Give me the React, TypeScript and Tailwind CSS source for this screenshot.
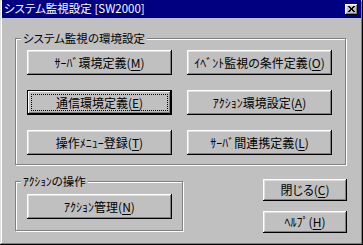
import React from "react";

const font = "font-['Noto_Sans_CJK_JP','Noto_Sans',sans-serif] [font-feature-settings:'palt']";
const bevel =
  "shadow-[inset_-1px_-1px_#000,inset_1px_1px_#fff,inset_-2px_-2px_#808080,inset_2px_2px_#dfdfdf]";
const bevelDefault =
  "shadow-[inset_0_0_0_1px_#000,inset_-2px_-2px_#000,inset_2px_2px_#fff,inset_-3px_-3px_#808080]";

function Label({ text, k }: { text: string; k: string }) {
  const i = text.indexOf("(");
  return (
    <span>
      {text.slice(0, i)}(<span className="underline underline-offset-2">{k}</span>)
    </span>
  );
}

function Btn({
  text,
  k,
  w = "w-[145px]",
  h = "h-[25px]",
  isDefault = false,
}: {
  text: string;
  k: string;
  w?: string;
  h?: string;
  isDefault?: boolean;
}) {
  return (
    <button
      className={`relative ${w} ${h} bg-[#c0c0c0] ${isDefault ? bevelDefault : bevel} flex items-center justify-center text-[12px] leading-none text-black`}
    >
      <Label text={text} k={k} />
      {isDefault && (
        <span className="absolute inset-[4px] border border-dotted border-black" />
      )}
    </button>
  );
}

function Group({
  title,
  className,
  children,
}: {
  title: string;
  className: string;
  children: React.ReactNode;
}) {
  return (
    <div
      className={`relative border border-[#808080] shadow-[inset_1px_1px_#fff,1px_1px_#fff] ${className}`}
    >
      <span className="absolute -top-[8px] left-[5px] bg-[#c0c0c0] px-[2px] text-[11.5px] leading-[14px] text-black">
        {title}
      </span>
      {children}
    </div>
  );
}

export default function App() {
  return (
    <div
      className={`w-[363px] h-[245px] bg-[#c0c0c0] flex flex-col px-[2px] pb-[3px] shadow-[inset_-1px_-1px_#000,inset_1px_1px_#dfdfdf,inset_-2px_-2px_#808080,inset_2px_2px_#fff] ${font}`}
    >
      <div className="h-[18px] bg-[#000080] flex items-center justify-between pl-[2px] pr-[3px]">
        <span className="text-white text-[11.5px] leading-none">システム監視設定 [SW2000]</span>
        <div className={`w-[13px] h-[11px] bg-[#c0c0c0] ${bevel} flex items-center justify-center`}>
          <svg width="7" height="6" viewBox="0 0 7 6">
            <path d="M0 0h2v1h1v1h1v-1h1v-1h2v1h-1v1h-1v2h1v1h1v1h-2v-1h-1v-1h-1v1h-1v1h-2v-1h1v-1h1v-2h-1v-1h-1z" fill="#000" />
          </svg>
        </div>
      </div>

      <div className="flex flex-col pl-[13px] pt-[20px]">
        <Group title="システム監視の環境設定" className="w-[331px] h-[127px] pl-[11px] pt-[11px]">
          <div className="grid grid-cols-[145px_145px] gap-x-[15px] gap-y-[15px]">
            <Btn text="ｻｰﾊﾞ環境定義(M)" k="M" />
            <Btn text="ｲﾍﾞﾝﾄ監視の条件定義(O)" k="O" />
            <Btn text="通信環境定義(E)" k="E" isDefault />
            <Btn text="ｱｸｼｮﾝ環境設定(A)" k="A" />
            <Btn text="操作ﾒﾆｭｰ登録(T)" k="T" />
            <Btn text="ｻｰﾊﾞ間連携定義(L)" k="L" />
          </div>
        </Group>

        <div className="flex mt-[14px]">
          <Group title="ｱｸｼｮﾝの操作" className="mt-[2px] w-[168px] h-[50px] pl-[11px] pt-[12px]">
            <Btn text="ｱｸｼｮﾝ管理(N)" k="N" />
          </Group>
          <div className="ml-[80px] flex flex-col gap-[10px]">
            <Btn text="閉じる(C)" k="C" w="w-[84px]" h="h-[22px]" />
            <Btn text="ﾍﾙﾌﾟ(H)" k="H" w="w-[84px]" h="h-[22px]" />
          </div>
        </div>
      </div>
    </div>
  );
}
